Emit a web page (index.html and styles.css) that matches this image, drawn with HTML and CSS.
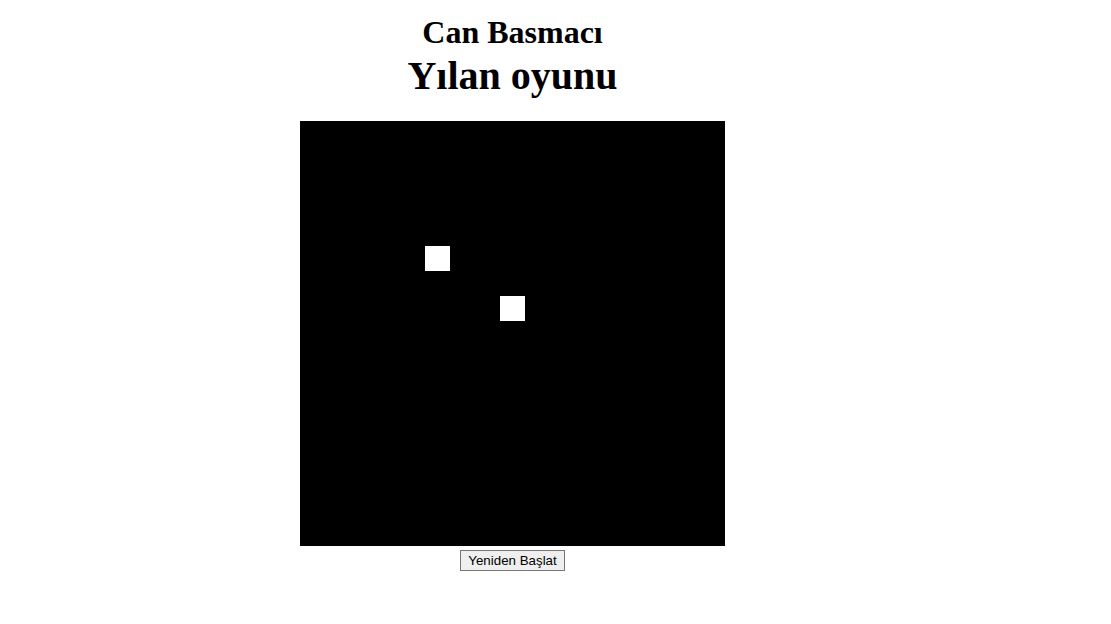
FILE: index.html
```html
<!DOCTYPE html>
<html lang="tr">
<head>
<meta charset="utf-8">
<title>Yılan oyunu</title>
<link rel="stylesheet" href="styles.css">
</head>
<body>
<main class="game">
  <h2 class="author">Can Basmacı</h2>
  <h1 class="title">Yılan oyunu</h1>
  <div class="board">
    <div class="cell" style="left:125px;top:125px"></div>
    <div class="cell" style="left:200px;top:175px"></div>
  </div>
  <button class="restart" type="button">Yeniden Başlat</button>
</main>
</body>
</html>
```
FILE: styles.css
```css
html, body {
  margin: 0;
  padding: 0;
  background: #ffffff;
}
body {
  font-family: "Liberation Serif", "Times New Roman", serif;
  color: #000;
}
.game {
  width: 425px;
  margin-left: 300px;
  padding-top: 14px;
  display: flex;
  flex-direction: column;
  align-items: center;
}
.author {
  margin: 0;
  font-size: 32px;
  line-height: 37px;
  font-weight: bold;
}
.title {
  margin: 2px 0 0;
  font-size: 40px;
  line-height: 46px;
  font-weight: bold;
}
.board {
  position: relative;
  margin-top: 22px;
  width: 425px;
  height: 425px;
  background: #000;
}
.cell {
  position: absolute;
  width: 25px;
  height: 25px;
  background: #fff;
}
.restart {
  margin-top: 4px;
  font-family: "Liberation Sans", Arial, sans-serif;
  font-size: 13.333px;
  line-height: 15px;
  padding: 2px 7px;
  border: 1px solid #767676;
  border-radius: 0;
  background: #efefef;
  color: #000;
}
```
